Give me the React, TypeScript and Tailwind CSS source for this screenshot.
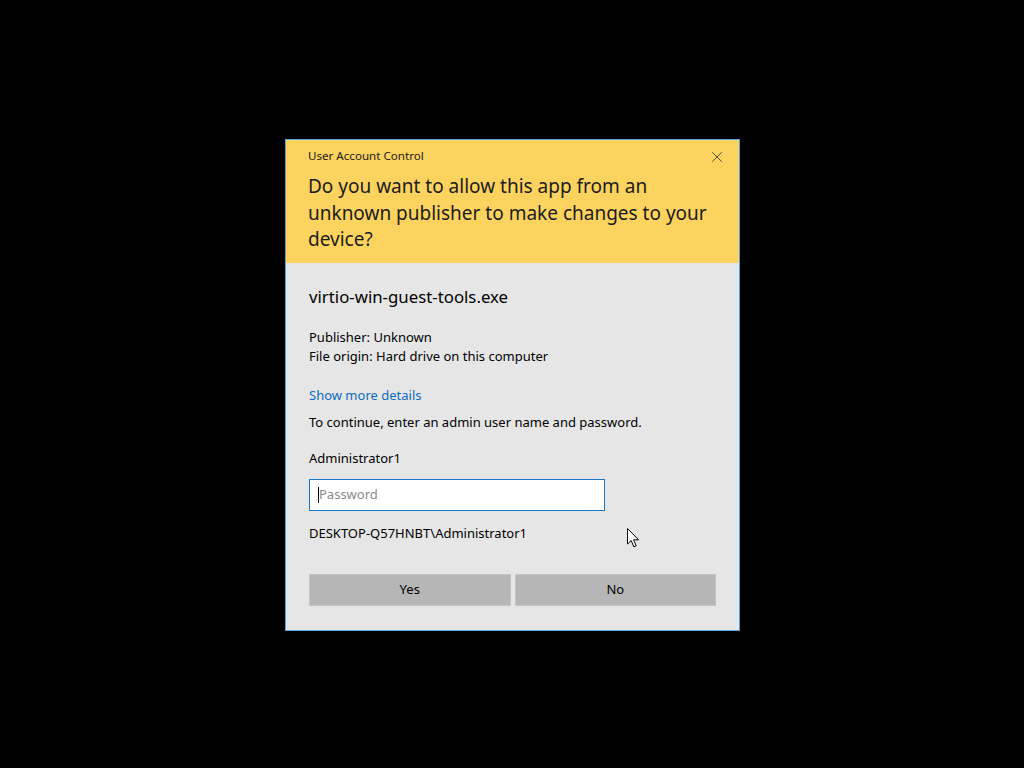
import { X } from 'lucide-react';

const font = { fontFamily: '"Noto Sans", "Open Sans", sans-serif' };

const Cursor = () => (
  <svg
    className="absolute left-[627px] top-[528px]"
    width="13"
    height="20"
    viewBox="0 0 13 20"
  >
    <path
      d="M0.5 0.5 L0.5 16 L4.2 12.6 L6.8 18.8 L9.2 17.8 L6.6 11.8 L11.6 11.8 Z"
      fill="#fff"
      stroke="#000"
      strokeWidth="1"
      strokeLinejoin="round"
    />
  </svg>
);

const UacDialog = () => {
  return (
    <div className="w-[455px] h-[492px] border border-[#5aa6dc] bg-[#e6e6e6] flex flex-col text-black">
      {/* yellow header */}
      <div className="relative bg-[#fcd35e] pl-[22px] pr-[18px] pt-[8px] pb-[10px] h-[123px]">
        <div className="text-[11.6px] leading-[16px] text-[#1b1b1b]">User Account Control</div>
        <button className="absolute right-[13px] top-[8px] text-[#333]">
          <X size={18} strokeWidth={1.1} />
        </button>
        <h1 className="mt-[9px] text-[19px] leading-[26.5px] text-[#1b1b1b]">
          Do you want to allow this app from an unknown publisher to make changes to your device?
        </h1>
      </div>

      {/* body */}
      <div className="flex-1 px-[23px] pt-[22px] pb-[24px] flex flex-col">
        <div className="text-[16.8px] leading-[24px]">virtio-win-guest-tools.exe</div>

        <div className="mt-[19px] text-[13px] leading-[19px]">
          <div>Publisher: Unknown</div>
          <div>File origin: Hard drive on this computer</div>
        </div>

        <a className="mt-[20px] text-[13px] leading-[19px] text-[#0a6cc2] self-start">Show more details</a>

        <div className="mt-[8px] text-[13px] leading-[19px]">
          To continue, enter an admin user name and password.
        </div>

        <div className="mt-[17px] text-[13px] leading-[19px]">Administrator1</div>

        <div className="mt-[11px] w-[296px] h-[32px] border border-[#1a78c8] bg-white flex items-center pl-[8px]">
          <span className="w-px h-[16px] bg-black" />
          <span className="text-[13px] text-[#8a8a8a]">Password</span>
        </div>

        <div className="mt-[13px] text-[13px] leading-[19px]">DESKTOP-Q57HNBT\Administrator1</div>

        <div className="mt-[31px] grid grid-cols-2 gap-[4px]">
          <button className="h-[32px] bg-[#b6b6b6] border border-[#c4c4c4] text-[13px]">Yes</button>
          <button className="h-[32px] bg-[#b6b6b6] border border-[#c4c4c4] text-[13px]">No</button>
        </div>
      </div>
    </div>
  );
};

export default function App() {
  return (
    <div className="relative w-[1024px] h-[768px] bg-black pl-[285px] pt-[139px]" style={font}>
      <UacDialog />
      <Cursor />
    </div>
  );
}
